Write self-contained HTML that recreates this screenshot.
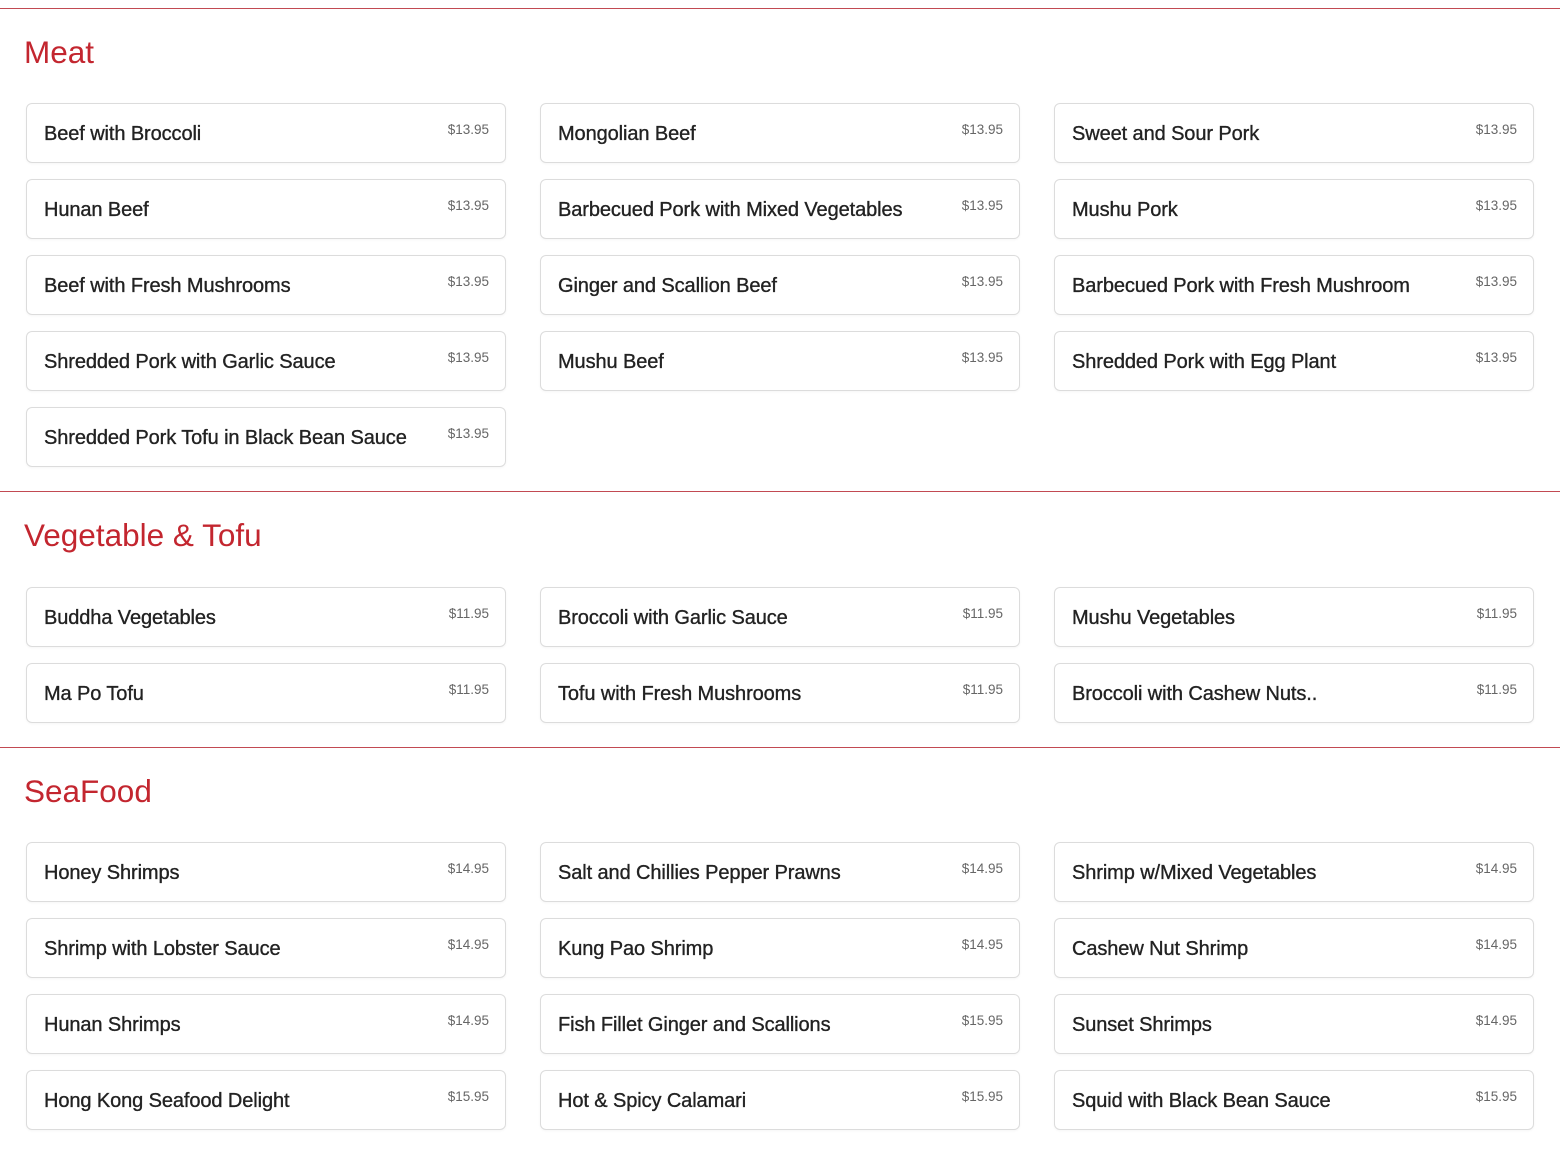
<!DOCTYPE html>
<html><head><meta charset="utf-8"><style>
*{box-sizing:border-box;margin:0;padding:0}
body{width:1560px;height:1149px;background:#fff;font-family:"Liberation Sans",sans-serif;overflow:hidden;position:relative}
.sec{position:absolute;left:0;width:1560px}
.line{position:absolute;left:0;top:0;width:1560px;height:1px;background:#c24a52}
h2{position:absolute;left:24px;top:24px;font-size:31.5px;line-height:40px;font-weight:400;color:#c3262f}
.grid{position:absolute;left:26px;top:95px;display:grid;grid-template-columns:480px 480px 480px;column-gap:34px;row-gap:16px}
.c{height:60px;border:1px solid #dcdcdc;border-radius:6px;position:relative;box-shadow:0 1px 2px rgba(0,0,0,.04)}
.n{position:absolute;left:17px;top:18px;font-size:20px;line-height:24px;color:#222;letter-spacing:-0.1px;-webkit-text-stroke:0.35px #222}
.p{position:absolute;right:16px;top:18px;font-size:13.5px;line-height:16px;color:#666}
</style></head><body>
<div class="sec" style="top:8px"><div class="line"></div><h2>Meat</h2><div class="grid">
<div class="c"><span class="n">Beef with Broccoli</span><span class="p">$13.95</span></div>
<div class="c"><span class="n">Mongolian Beef</span><span class="p">$13.95</span></div>
<div class="c"><span class="n">Sweet and Sour Pork</span><span class="p">$13.95</span></div>
<div class="c"><span class="n">Hunan Beef</span><span class="p">$13.95</span></div>
<div class="c"><span class="n">Barbecued Pork with Mixed Vegetables</span><span class="p">$13.95</span></div>
<div class="c"><span class="n">Mushu Pork</span><span class="p">$13.95</span></div>
<div class="c"><span class="n">Beef with Fresh Mushrooms</span><span class="p">$13.95</span></div>
<div class="c"><span class="n">Ginger and Scallion Beef</span><span class="p">$13.95</span></div>
<div class="c"><span class="n">Barbecued Pork with Fresh Mushroom</span><span class="p">$13.95</span></div>
<div class="c"><span class="n">Shredded Pork with Garlic Sauce</span><span class="p">$13.95</span></div>
<div class="c"><span class="n">Mushu Beef</span><span class="p">$13.95</span></div>
<div class="c"><span class="n">Shredded Pork with Egg Plant</span><span class="p">$13.95</span></div>
<div class="c"><span class="n">Shredded Pork Tofu in Black Bean Sauce</span><span class="p">$13.95</span></div>
</div></div>
<div class="sec" style="top:491px"><div class="line"></div><h2>Vegetable &amp; Tofu</h2><div class="grid" style="top:96px">
<div class="c"><span class="n">Buddha Vegetables</span><span class="p">$11.95</span></div>
<div class="c"><span class="n">Broccoli with Garlic Sauce</span><span class="p">$11.95</span></div>
<div class="c"><span class="n">Mushu Vegetables</span><span class="p">$11.95</span></div>
<div class="c"><span class="n">Ma Po Tofu</span><span class="p">$11.95</span></div>
<div class="c"><span class="n">Tofu with Fresh Mushrooms</span><span class="p">$11.95</span></div>
<div class="c"><span class="n">Broccoli with Cashew Nuts..</span><span class="p">$11.95</span></div>
</div></div>
<div class="sec" style="top:747px"><div class="line"></div><h2>SeaFood</h2><div class="grid">
<div class="c"><span class="n">Honey Shrimps</span><span class="p">$14.95</span></div>
<div class="c"><span class="n">Salt and Chillies Pepper Prawns</span><span class="p">$14.95</span></div>
<div class="c"><span class="n">Shrimp w/Mixed Vegetables</span><span class="p">$14.95</span></div>
<div class="c"><span class="n">Shrimp with Lobster Sauce</span><span class="p">$14.95</span></div>
<div class="c"><span class="n">Kung Pao Shrimp</span><span class="p">$14.95</span></div>
<div class="c"><span class="n">Cashew Nut Shrimp</span><span class="p">$14.95</span></div>
<div class="c"><span class="n">Hunan Shrimps</span><span class="p">$14.95</span></div>
<div class="c"><span class="n">Fish Fillet Ginger and Scallions</span><span class="p">$15.95</span></div>
<div class="c"><span class="n">Sunset Shrimps</span><span class="p">$14.95</span></div>
<div class="c"><span class="n">Hong Kong Seafood Delight</span><span class="p">$15.95</span></div>
<div class="c"><span class="n">Hot &amp; Spicy Calamari</span><span class="p">$15.95</span></div>
<div class="c"><span class="n">Squid with Black Bean Sauce</span><span class="p">$15.95</span></div>
</div></div>
</body></html>
